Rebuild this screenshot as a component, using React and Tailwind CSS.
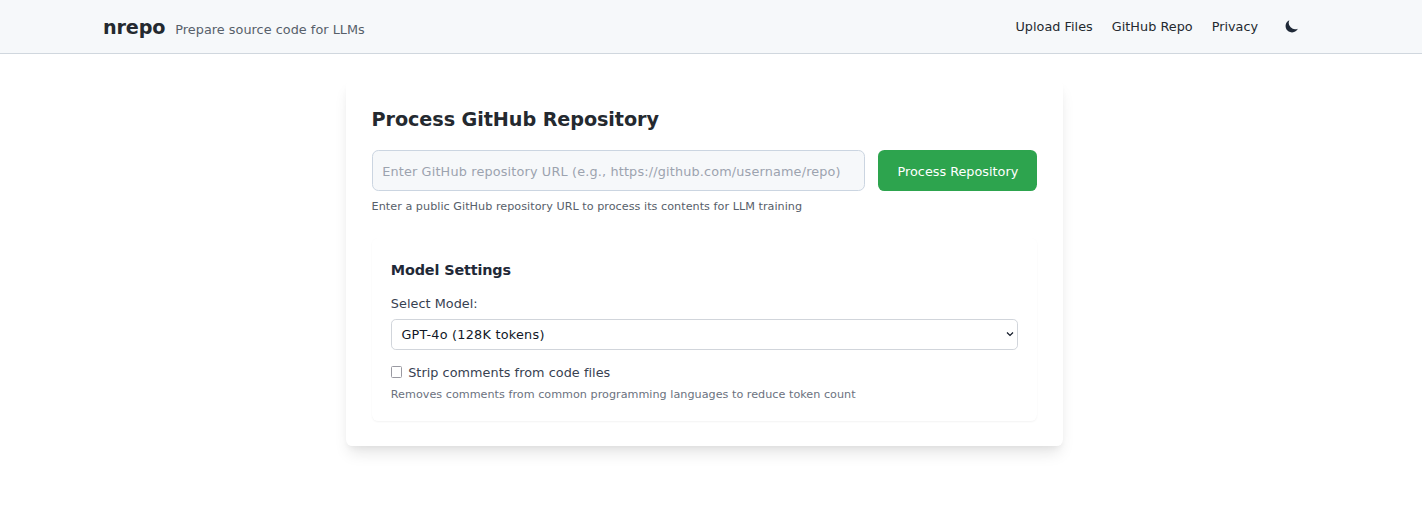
import React from "react";

function Header() {
  return (
    <header className="h-[54px] border-b border-[#d0d7de] bg-[#f6f8fa] pr-[13px]">
      <div className="mx-auto flex h-full max-w-[1229px] items-center justify-between px-[13px]">
        <div className="flex items-baseline gap-[10px] pt-[2px]">
          <h1 className="text-[19.2px] leading-[26px] font-bold tracking-[-0.15px] text-[#24292f]">nrepo</h1>
          <span className="text-[12.8px] tracking-[0.04px] text-[#57606a]">Prepare source code for LLMs</span>
        </div>
        <nav className="flex items-center text-[12.8px] text-[#24292f]">
          <a className="mr-[19px] tracking-[0.03px]">Upload Files</a>
          <a className="mr-[19px] tracking-[0.03px]">GitHub Repo</a>
          <a className="mr-[26px]">Privacy</a>
          <button className="mr-[6px] pb-[1px]" aria-label="Toggle theme">
            <svg className="block size-4 text-[#1f2937]" viewBox="0 0 20 20" fill="currentColor">
              <path d="M17.293 13.293A8 8 0 016.707 2.707a8.001 8.001 0 1010.586 10.586z" />
            </svg>
          </button>
        </nav>
      </div>
    </header>
  );
}

function ModelSettings() {
  return (
    <section className="mt-[22.6px] h-[183px] rounded-[6.4px] bg-white px-[19.2px] pt-[21px] shadow-[0_1px_2px_0_rgb(0_0_0/0.05)]">
      <h3 className="text-[14.4px] leading-[22px] font-bold tracking-[-0.14px] text-[#1f2937]">Model Settings</h3>
      <label className="mt-[14px] block text-[12.8px] leading-[18px] tracking-[0.05px] text-[#374151]">Select Model:</label>
      <div className="relative mt-[6px]">
        <select className="block h-[31px] w-full appearance-none rounded-[4.8px] border border-[#d1d5db] bg-white px-[9.6px] pt-[2px] text-[12.8px] tracking-[0.25px] text-[#111827]">
          <option>GPT-4o (128K tokens)</option>
        </select>
        <svg
          className="pointer-events-none absolute top-[12px] right-[4px] h-[6px] w-[8px] text-[#111827]"
          viewBox="0 0 8 6"
          fill="none"
          stroke="currentColor"
          strokeWidth="1.2"
        >
          <path d="M1 1.5 4 4.5 7 1.5" />
        </svg>
      </div>
      <label className="mt-[13px] flex items-center gap-[6.4px] text-[12.8px] leading-[19px] tracking-[0.05px] text-[#374151]">
        <input
          type="checkbox"
          className="h-[12px] w-[11px] appearance-none rounded-[1.5px] border border-[#9a9aa2] bg-white checked:bg-[#2563eb]"
        />
        Strip comments from code files
      </label>
      <p className="mt-[5px] text-[11.2px] leading-[16px] tracking-[0.02px] text-[#6b7280]">
        Removes comments from common programming languages to reduce token count
      </p>
    </section>
  );
}

export default function App() {
  return (
    <div className="min-h-screen bg-white font-['Verdana','DejaVu_Sans',sans-serif]">
      <Header />
      <main className="pt-[26px] pr-[13px]">
        <div className="mx-auto h-[366px] w-[717px] rounded-[6.4px] bg-white px-[25.6px] pt-[26.6px] shadow-[0_10px_15px_-3px_rgb(0_0_0/0.1),0_4px_6px_-2px_rgb(0_0_0/0.05)]">
          <h2 className="text-[19.2px] leading-[26px] font-bold tracking-[-0.08px] text-[#24292f]">Process GitHub Repository</h2>
          <div className="mt-[17.4px] flex h-[41px] gap-[13.2px]">
            <input
              type="text"
              placeholder="Enter GitHub repository URL (e.g., https://github.com/username/repo)"
              className="min-w-0 flex-1 rounded-[6.4px] border border-[#cbd5e1] bg-[#f6f8fa] px-[9.6px] pt-[2px] text-[12.8px] tracking-[0.17px] placeholder:text-[#9ca3af]"
            />
            <button className="w-[159px] rounded-[6.4px] bg-[#2da44e] pt-[2px] text-[12.8px] text-white">
              Process Repository
            </button>
          </div>
          <p className="mt-[7px] text-[11.2px] leading-[17px] tracking-[0.035px] text-[#57606a]">
            Enter a public GitHub repository URL to process its contents for LLM training
          </p>
          <ModelSettings />
        </div>
      </main>
    </div>
  );
}
